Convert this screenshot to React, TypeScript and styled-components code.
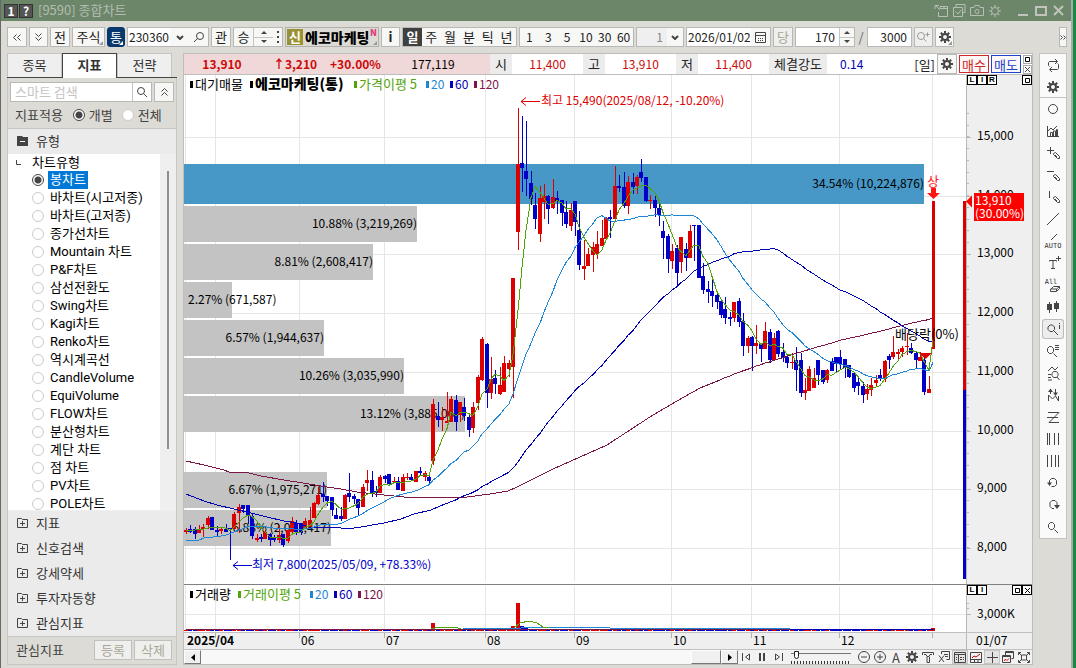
import React from "react";
import styled, { createGlobalStyle, css } from "styled-components";

const KR = `"Noto Sans CJK KR", "Noto Sans", sans-serif`;
const UP = "#dc0000";
const DOWN = "#0000c8";
const MA5 = "#52a30a";
const MA20 = "#1e86d6";
const MA60 = "#0000b4";
const MA120 = "#7a1648";

const GlobalStyle = createGlobalStyle`
  * { box-sizing: border-box; }
  body { margin: 0; font-family: ${KR}; font-size: 13px; line-height: 16px; color: #222; background: #168c3f; }
  button, input { font: inherit; color: inherit; margin: 0; }
  button { padding: 0; cursor: pointer; }
`;

/* ---------- window frame ---------- */

const Desktop = styled.div`
  min-height: 100vh;
  display: flex;
  padding-right: 3px;
  background: #168c3f;
`;

const Window = styled.div`
  flex: 1;
  min-width: 0;
  display: flex;
  flex-direction: column;
  background: #dcdbd6;
  border-left: 1px solid #696969;
  border-right: 2px solid #a9a9b0;
`;

const TitleBar = styled.header`
  height: 21px;
  flex: none;
  display: flex;
  align-items: center;
  gap: 1px;
  padding: 0 4px 0 3px;
  background: #6c8669;
  color: #b4bcb0;
`;

const TitleBadge = styled.button`
  width: 14px;
  height: 14px;
  border: 1px solid #333;
  background: #555;
  color: #fff;
  font-size: 12px;
  font-weight: 700;
  line-height: 12px;
`;

const Title = styled.h1`
  margin: 0 0 0 4px;
  padding-bottom: 2px;
  font-size: 13px;
  font-weight: 400;
`;

const TitleIcons = styled.div`
  margin-left: auto;
  display: flex;
  align-items: center;
  gap: 2px;
`;

const TitleButton = styled.button`
  width: 16px;
  height: 16px;
  border: 0;
  background: none;
  color: #b9beb6;
  display: grid;
  place-items: center;
`;

/* ---------- toolbar ---------- */

const Toolbar = styled.div`
  flex: none;
  display: flex;
  align-items: center;
  gap: 2px;
  padding: 6px 4px 6px 6px;
`;

const ToolButton = styled.button<{ $w?: number; $tone?: "plain" | "navy" | "dark" | "muted" }>`
  position: relative;
  flex: none;
  width: ${(p) => p.$w ?? 20}px;
  height: 20px;
  display: flex;
  align-items: center;
  justify-content: center;
  border: 1px solid #b8b8b6;
  background: #f7f7f6;
  color: #222;
  line-height: 16px;
  ${(p) => p.$tone === "navy" && css`background: #08386c; border-color: #08386c; color: #fff; border-radius: 3px;`}
  ${(p) => p.$tone === "dark" && css`background: #404040; border-color: #404040; color: #fff; font-weight: 700;`}
  ${(p) => p.$tone === "muted" && css`background: #efefed; color: #a8a797;`}
`;

const Corner = styled.i<{ $c?: string }>`
  position: absolute;
  right: 1px;
  bottom: 1px;
  border: 2px solid transparent;
  border-right-color: ${(p) => p.$c ?? "#999"};
  border-bottom-color: ${(p) => p.$c ?? "#999"};
`;

const Group = styled.div<{ $w: number }>`
  flex: none;
  display: flex;
  width: ${(p) => p.$w}px;
  height: 20px;
  border: 1px solid #b8b8b6;
  background: #f7f7f6;
  > * + * { border-left: 1px solid #c4c4c2; }
`;

const Cell = styled.button<{ $on?: boolean; $w?: number; $bare?: boolean }>`
  flex: ${(p) => (p.$w ? "none" : "1")};
  width: ${(p) => (p.$w ? `${p.$w}px` : "auto")};
  min-width: 0;
  border: 0 solid #c4c4c2;
  display: flex;
  align-items: center;
  justify-content: center;
  background: ${(p) => (p.$on ? "#404040" : "transparent")};
  color: ${(p) => (p.$on ? "#fff" : "#222")};
  font-weight: ${(p) => (p.$on ? 700 : 400)};
`;

const NumCell = styled(Cell)`
  font-size: 12px;
`;

const Field = styled.input<{ $right?: boolean; $soft?: boolean }>`
  flex: 1;
  min-width: 0;
  width: 0;
  border: 0;
  padding: 0 ${(p) => (p.$right ? 4 : 1)}px 0 1px;
  background: ${(p) => (p.$soft ? "#efefef" : "#fff")};
  color: ${(p) => (p.$soft ? "#888" : "#222")};
  font-size: 12px;
  text-align: ${(p) => (p.$right ? "right" : "left")};
  outline: none;
`;

const Spin = styled.div<{ $w: number }>`
  flex: none;
  width: ${(p) => p.$w}px;
  display: flex;
  flex-direction: column;
  > button + button { border-top: 1px solid #c4c4c2; }
`;

const SpinButton = styled.button`
  flex: 1;
  border: 0;
  background: none;
  display: grid;
  place-items: center;
`;

const NameBox = styled.button`
  flex: none;
  position: relative;
  width: 94px;
  height: 20px;
  display: flex;
  align-items: center;
  gap: 2px;
  padding: 0 1px;
  border: 1px solid #b0b0ae;
  background: #dcdbd6;
  color: #000;
  font-size: 14px;
  font-weight: 900;
  white-space: nowrap;
`;

const NameBadge = styled.span`
  flex: none;
  width: 16px;
  height: 16px;
  line-height: 16px;
  background: #9c9132;
  color: #fff;
  font-size: 13px;
  font-weight: 700;
`;

const NewMark = styled.sup`
  position: absolute;
  right: 1px;
  top: 0;
  font-size: 9px;
  line-height: 10px;
  color: #e0407a;
`;

const Slash = styled.span`
  width: 8px;
  text-align: center;
  color: #666;
`;

const Push = styled.div`
  flex: 1;
`;

/* ---------- body ---------- */

const Body = styled.div`
  flex: 1;
  min-height: 0;
  display: flex;
  gap: 6px;
  padding: 0 4px 4px 6px;
`;

const Side = styled.aside`
  flex: none;
  width: 170px;
  display: flex;
  flex-direction: column;
`;

const Tabs = styled.div`
  flex: none;
  display: flex;
  height: 25px;
  border-bottom: 1px solid #444;
`;

const Tab = styled.button<{ $on?: boolean }>`
  width: 55px;
  height: ${(p) => (p.$on ? 25 : 24)}px;
  padding-bottom: 2px;
  border: 1px solid ${(p) => (p.$on ? "#444" : "#c4c4c2")};
  border-bottom: 0;
  background: ${(p) => (p.$on ? "#fff" : "#efefef")};
  color: #333;
  font-weight: ${(p) => (p.$on ? 700 : 400)};
`;

const SidePanel = styled.div`
  flex: 1;
  min-width: 0;
  display: flex;
  flex-direction: column;
  border: 1px solid #c6c6c4;
  border-top: 0;
`;

const SearchRow = styled.div`
  flex: none;
  display: flex;
  gap: 2px;
  padding: 4px 2px 0;
`;

const SearchBox = styled.div`
  flex: 1;
  min-width: 0;
  display: flex;
  height: 20px;
  border: 1px solid #b8b8b6;
  background: #fff;
  > button { border-left-width: 1px; }
`;

const SearchInput = styled.input`
  flex: 1;
  width: 0;
  min-width: 0;
  border: 0;
  padding: 0 4px;
  outline: none;
  background: none;
  &::placeholder { color: #c4c4c4; opacity: 1; }
`;

const ApplyRow = styled.div`
  flex: none;
  display: flex;
  align-items: center;
  height: 27px;
  padding: 0 7px;
  color: #444;
  border-bottom: 1px solid #c6c6c4;
`;

const RadioLabel = styled.label<{ $ml?: number }>`
  display: flex;
  align-items: center;
  gap: 4px;
  margin-left: ${(p) => p.$ml ?? 0}px;
`;

const Radio = styled.input`
  appearance: none;
  flex: none;
  width: 12px;
  height: 12px;
  border: 1px solid #ccc;
  border-radius: 50%;
  background: #fff;
  &:checked {
    border-color: #444;
    background: radial-gradient(circle, #444 0 3px, #fff 4px);
  }
`;

const Section = styled.button`
  flex: none;
  display: flex;
  align-items: center;
  gap: 8px;
  height: 25px;
  padding: 0 9px 2px;
  border: 0;
  background: #ebebeb;
  color: #333;
  text-align: left;
`;

const TreeWrap = styled.div`
  flex: 1 1 356px;
  min-height: 0;
  display: flex;
  background: #efefef;
`;

const Tree = styled.div`
  flex: 1;
  height: 356px;
  overflow: hidden;
  background: #fff;
  color: #000;
  font-family: Roboto, ${KR};
`;

const TreeHead = styled.div`
  display: flex;
  align-items: center;
  gap: 11px;
  height: 17px;
  padding-left: 8px;
`;

const TreeRow = styled.label`
  display: flex;
  align-items: center;
  gap: 4px;
  height: 18px;
  padding-left: 24px;
  white-space: nowrap;
`;

const TreeText = styled.span<{ $on: boolean }>`
  padding: 0 2px;
  line-height: 18px;
  background: ${(p) => (p.$on ? "#0078d7" : "transparent")};
  color: ${(p) => (p.$on ? "#fff" : "#000")};
`;

const TreeScroll = styled.div`
  flex: none;
  width: 16px;
  padding: 17px 7px 0;
`;

const TreeThumb = styled.div`
  height: 278px;
  background: #8e8e8e;
`;

const SideFoot = styled.div`
  flex: none;
  display: flex;
  align-items: center;
  gap: 2px;
  height: 28px;
  padding: 0 4px 2px 8px;
  border-top: 1px solid #c6c6c4;
  color: #444;
`;

const FootButton = styled.button`
  width: 38px;
  height: 20px;
  border: 1px solid #c0c0be;
  background: #efefed;
  color: #a8a797;
`;

/* ---------- chart ---------- */

const ChartBox = styled.main`
  flex: 1;
  min-width: 0;
  display: flex;
  flex-direction: column;
  border: 1px solid #bdbdbd;
  background: #fff;
`;

const QuoteBar = styled.div`
  flex: none;
  display: flex;
  height: 21px;
  border-bottom: 1px solid #bdbdbd;
  font-size: 12px;
  line-height: 19px;
  white-space: nowrap;
`;

const QuoteMain = styled.div`
  flex: none;
  width: 306px;
  display: flex;
  background: #f0d8d8;
  color: #cc0a0a;
  font-weight: 700;
`;

const Q = styled.span<{ $w: number; $c?: string; $tag?: boolean; $left?: boolean }>`
  flex: none;
  width: ${(p) => p.$w}px;
  text-align: ${(p) => (p.$left ? "left" : "center")};
  padding-left: ${(p) => (p.$left ? 13 : 0)}px;
  color: ${(p) => p.$c ?? "inherit"};
  font-weight: ${(p) => (p.$c ? 400 : "inherit")};
  font-size: ${(p) => (p.$tag ? 13 : 12)}px;
  background: ${(p) => (p.$tag ? "#ececec" : "transparent")};
`;

const QuoteTools = styled.div`
  margin-left: auto;
  display: flex;
  align-items: center;
  gap: 2px;
  font-size: 13px;
`;

const TradeButton = styled.button<{ $c: string }>`
  width: 30px;
  height: 18px;
  border: 1px solid ${(p) => p.$c};
  background: #fdf8f8;
  color: ${(p) => p.$c};
  line-height: 15px;
`;

const MiniStack = styled.div`
  display: flex;
  flex-direction: column;
  gap: 1px;
`;

const MiniButton = styled.button`
  width: 9px;
  height: 9px;
  display: grid;
  place-items: center;
  border: 1px solid #aaa;
  background: #fff;
`;

const PanelRow = styled.section<{ $h: number; $grow?: boolean; $line?: string }>`
  flex: ${(p) => (p.$grow ? `1 1 ${p.$h}px` : "none")};
  height: ${(p) => (p.$grow ? "auto" : `${p.$h}px`)};
  min-height: 0;
  display: flex;
  border-bottom: 1px solid ${(p) => p.$line ?? "#c0c0c0"};
`;

const Plot = styled.svg`
  flex: 1;
  min-width: 0;
  width: 0;
  height: 100%;
  display: block;
  overflow: visible;
  font-family: ${KR};
  font-size: 12px;
`;

const Axis = styled.div`
  flex: none;
  position: relative;
  width: 66px;
  border-left: 1px solid #b8b8b8;
  background: #efefef;
  > svg { display: block; width: 100%; height: 100%; font-family: ${KR}; font-size: 12px; overflow: visible; }
`;

const AxisButtons = styled.div`
  position: absolute;
  left: 0;
  right: 0;
  top: 0;
  display: flex;
`;

const AxisButton = styled.button<{ $push?: boolean }>`
  width: 10px;
  height: 10px;
  margin-left: ${(p) => (p.$push ? "auto" : "0")};
  display: grid;
  place-items: center;
  border: 1px solid #000;
  & + & { border-left-width: ${(p) => (p.$push ? 1 : 0)}px; }
  background: #fff;
  color: #000;
  font-family: "Liberation Sans", sans-serif;
  font-size: 8px;
  font-weight: 700;
  line-height: 8px;
`;

const DateRow = styled.div`
  flex: none;
  height: 17px;
  display: flex;
  background: #efefef;
  border-bottom: 1px solid #c0c0c0;
`;

const BottomBar = styled.div`
  flex: none;
  height: 14px;
  display: flex;
  background: #f2f2f2;
`;

const Track = styled.div`
  flex: 1;
  display: flex;
  background: #f8f8f8;
`;

const Classic = styled.button<{ $w: number; $push?: boolean }>`
  flex: none;
  width: ${(p) => p.$w}px;
  margin-left: ${(p) => (p.$push ? "auto" : "0")};
  display: grid;
  place-items: center;
  border: 1px solid;
  border-color: #fff #777 #777 #fff;
  background: #f0f0f0;
`;

const BarButton = styled.button<{ $on?: boolean }>`
  flex: none;
  width: 16px;
  border: 0;
  display: grid;
  place-items: center;
  background: ${(p) => (p.$on ? "#e4e4e4" : "transparent")};
  box-shadow: ${(p) => (p.$on ? "inset 0 0 0 1px #c4c4c4" : "none")};
  color: #444;
`;

const SliderWrap = styled.div`
  flex: none;
  width: 70px;
  padding: 0 5px;
`;

const Slider = styled.input`
  appearance: none;
  display: block;
  width: 60px;
  height: 14px;
  background:
    linear-gradient(#777, #777) 0 3px / 100% 1px no-repeat,
    repeating-linear-gradient(90deg, #333 0 1px, transparent 1px 3px) 0 11px / 100% 3px no-repeat;
  &::-webkit-slider-thumb {
    appearance: none;
    width: 5px;
    height: 8px;
    margin-top: -5px;
    border: 1px solid #222;
    border-radius: 0 0 3px 3px;
    background: #fff;
  }
`;

const Strip = styled.nav`
  flex: none;
  align-self: flex-start;
  width: 28px;
  border: 1px solid #c4c4c2;
  background: #fafafa;
  display: flex;
  flex-direction: column;
  align-items: center;
`;

const StripButton = styled.button<{ $on?: boolean; $line?: boolean }>`
  width: ${(p) => (p.$on ? 22 : 26)}px;
  height: ${(p) => (p.$on ? 20 : 22)}px;
  margin: ${(p) => (p.$on ? 1 : 0)}px 0;
  border: 0;
  border-bottom: ${(p) => (p.$line ? "1px solid #c4c4c2" : "0")};
  box-shadow: ${(p) => (p.$on ? "inset 0 0 0 1px #bbb" : "none")};
  border-radius: ${(p) => (p.$on ? 3 : 0)}px;
  background: ${(p) => (p.$on ? "#ededed" : "transparent")};
  display: grid;
  place-items: center;
  color: #444;
`;

/* ---------- icons ---------- */

type IconProps = { d?: string; fill?: string; w?: number; h?: number; c?: string; sw?: number; children?: React.ReactNode };

const Icon = ({ d, fill, w = 16, h = 16, c = "#444", sw = 1, children }: IconProps) => (
  <svg width={w} height={h} viewBox={`0 0 ${w} ${h}`} fill="none" stroke={c} strokeWidth={sw} aria-hidden="true">
    {d && <path d={d} />}
    {fill && <path d={fill} fill={c} stroke="none" />}
    {children}
  </svg>
);

const Gear = ({ c = "#444", thin = false }: { c?: string; thin?: boolean }) => (
  <Icon w={12} h={12} c={c}>
    <circle cx="6" cy="6" r={thin ? 3.5 : 3} strokeWidth={thin ? 1 : 2} />
    <path d="M6 0v2M6 10v2M0 6h2M10 6h2M1.8 1.8l1.5 1.5M8.7 8.7l1.5 1.5M1.8 10.2l1.5-1.5M8.7 3.3l1.5-1.5" strokeWidth={thin ? 1.2 : 2} />
  </Icon>
);

const Lens = ({ flip = false }: { flip?: boolean }) => (
  <Icon w={12} h={12} d={flip ? "M4.5 7.5L1 11" : "M7.5 7.5L11 11"}>
    <circle cx={flip ? 7 : 5} cy="5" r="3.5" />
  </Icon>
);

const Caret = ({ up = false }: { up?: boolean }) => <Icon w={6} h={3} fill={up ? "M0 3L3 0L6 3z" : "M0 0L3 3L6 0z"} />;
const Chevron = () => <Icon w={8} h={5} sw={2} d="M1 1l3 3l3-3" />;
const PENCIL = "M12.5 11.5l2-1l4 4v2h-2l-4-4zM14 13l2 2";
const STRIP_LENS = "M13.5 13.5L17 17M9.5 6.5h2l2 2v3l-2 2h-2l-2-2v-3z";

const stripIcons: { name: string; on?: boolean; line?: boolean; node: React.ReactNode }[] = [
  { name: "새로고침", node: <Icon w={24} h={22} d="M8.5 12.5l-1-1V8.5l1-1H16M14 5l2.5 2.5L14 10M16.5 9.5l1 1v4l-1 1H9M11 13l-2.5 2.5L11 18" /> },
  { name: "설정", line: true, node: <Gear /> },
  { name: "원", node: <Icon w={24} h={22}><circle cx="12" cy="11" r="4.5" /></Icon> },
  { name: "차트", node: <Icon w={24} h={22} d="M6.5 6v10.5H18M7 11l3-3l2 2l4-4M9.5 16v-3.5h2V16M12.5 16v-5h2V16M15.5 16V9.5h1V16" /> },
  { name: "십자선 그리기", node: <Icon w={24} h={22} d={`M6 8.5h7M9.5 5v7${PENCIL}`} /> },
  { name: "수평선 그리기", node: <Icon w={24} h={22} d={`M6 7.5h7${PENCIL}`} /> },
  { name: "수직선 그리기", node: <Icon w={24} h={22} d={`M8.5 5v7${PENCIL}`} /> },
  { name: "추세선", node: <Icon w={24} h={22} d="M6 17L18 5" /> },
  { name: "자동 추세선", node: <Icon w={24} h={22} d="M10 10l6-6"><text x="12" y="18" fontSize="7" fontFamily="DejaVu Sans Mono, monospace" textAnchor="middle" fill="#333" stroke="none">AUTO</text></Icon> },
  { name: "문자", node: <Icon w={24} h={22} d="M15 6.5h5M17.5 4v5M8.5 9.5V8.5h7v1M12 8.5v8M10 16.5h4" /> },
  { name: "전체 지우기", node: <Icon w={24} h={22} d="M9.5 15.5l3-3h6v2l-3 3h-6zM9.5 15h6l3-2.5M15.5 15v2"><text x="10" y="10" fontSize="7" fontFamily="DejaVu Sans Mono, monospace" textAnchor="middle" fill="#333" stroke="none">All</text></Icon> },
  { name: "봉", node: <Icon w={24} h={22} d="M8.500 6v11M15.5 5v11" fill="M6 8h5v6H6zM13 7h5v6h-5z" /> },
  { name: "정보 조회", on: true, node: <Icon w={22} h={20} d="M12 12l4 4M8 6h2.500l2 2v2.500l-2 2H8l-2-2V8zM17.500 4v1M17.500 6v4" /> },
  { name: "목록 조회", node: <Icon w={24} h={22} d="M12.5 13.5L16 17M8.5 6.5h2l2 2v3l-2 2h-2l-2-2v-3zM14 5.5h4M14 7.5h4M14 9.5h4" /> },
  { name: "차트 검색", node: <Icon w={24} h={22} d="M7 9l4-4l3 3l3-3M7 12.5h3M7 15.5h3M7 18h4M16 15l2.5 3M12.5 9.5h3l1.500 2v2l-1.500 2h-3l-1.500-2v-2z" /> },
  { name: "매매 신호", node: <Icon w={24} h={22} d="M7.5 17v-6l4 4l3-3l3 5v-5M9.5 10V6M14.5 5v5" fill="M7 8l2.500-3.500L12 8zM12 8.500l2.500 3.500l2.500-3.500z" /> },
  { name: "지그재그", node: <Icon w={24} h={22} d="M7 6.5h11L8 16.5h10M6 11.5h11" /> },
  { name: "시간대", node: <Icon w={24} h={22} d="M6.5 5v12M8.5 5v12M13.5 5v12M17.5 5v12" /> },
  { name: "등분선", node: <Icon w={24} h={22} d="M6.5 5v12M10.5 5v12M14.5 5v12M17.5 5v12" /> },
  { name: "실행 취소", node: <Icon w={24} h={22} d="M8.500 11V8.500l2-2h3l2 2v4l-2 2h-3" fill="M6 10.500h5l-2.500 3.500z" /> },
  { name: "다시 실행", node: <Icon w={24} h={22} d="M13 14.500h-2l-2-2v-4l2-2h3l2 2V11" fill="M13 11h6l-3 4z" /> },
  { name: "확대", node: <Icon w={24} h={22} d={STRIP_LENS} /> },
];

/* ---------- chart data ---------- */

type Candle = [up: 0 | 1, top: number, bottom: number, high: number, low: number];

const candles = [
  [1,530,532,528,534],[0,529,532,525,533],[0,529,534,527,539],[1,529,533,525,533],[1,527,529,524,537],[1,518,525,516,529],[0,517,530,517,530],[0,530,532,526,537],[1,529,531,527,534],[0,529,532,524,532],
  [0,528,529,528,560],[1,514,529,512,529],[1,507,513,504,533],[0,505,509,505,513],[0,505,516,505,524],[0,516,536,514,539],[1,538,540,534,542],[0,537,539,534,542],[1,532,539,530,539],[0,534,540,533,546],
  [0,538,540,535,542],[1,535,540,525,543],[0,534,545,534,547],[1,530,541,530,543],[1,521,532,517,534],[0,523,532,520,535],[0,523,533,523,535],[1,521,529,518,529],[1,520,527,507,529],[1,503,518,502,518],
  [1,495,504,487,505],[0,494,497,482,502],[0,496,501,496,506],[0,497,510,497,516],[0,515,519,508,519],[0,516,519,507,521],[1,495,519,494,519],[0,493,497,473,502],[0,496,499,494,504],[0,499,508,499,515],
  [1,487,507,484,507],[1,480,483,470,491],[0,480,493,471,497],[0,491,493,486,497],[1,477,493,475,493],[0,476,479,475,483],[0,474,484,474,485],[1,481,482,477,483],[0,481,490,477,490],[1,477,491,474,491],
  [1,477,478,473,480],[0,477,480,474,480],[1,471,482,471,482],[0,471,473,467,476],[1,473,477,471,481],[0,477,481,474,485],[1,404,461,399,465],[0,416,420,402,427],[1,417,420,407,431],[1,421,423,392,423],
  [1,399,422,396,422],[0,400,422,395,431],[1,402,415,402,422],[0,407,416,398,421],[0,417,430,413,437],[1,407,428,402,433],[1,377,403,375,410],[1,339,380,337,381],[0,344,393,343,408],[1,379,393,357,399],
  [0,378,384,370,394],[1,385,394,367,395],[1,363,392,356,392],[1,363,369,360,377],[1,278,367,278,398],[1,164,232,108,250],[0,163,168,116,192],[0,171,179,121,196],[0,183,199,171,205],[0,205,219,193,229],
  [1,198,234,186,242],[1,196,202,184,219],[0,196,209,195,224],[1,197,208,179,209],[0,198,201,191,214],[0,200,213,200,226],[0,212,224,201,228],[1,210,226,203,231],[0,201,222,201,236],[0,230,265,211,270],
  [1,266,269,240,280],[1,254,266,248,266],[1,247,255,242,272],[1,244,254,231,259],[1,238,246,220,246],[1,218,239,217,239],[0,217,219,210,238],[1,186,219,166,221],[0,186,188,175,192],[0,187,206,172,208],
  [1,182,206,176,214],[0,182,187,173,194],[1,177,186,175,194],[0,172,178,159,182],[0,177,201,177,202],[1,200,201,195,209],[0,200,208,196,217],[0,208,215,204,226],[0,231,238,221,259],[0,236,259,234,273],
  [1,251,261,244,269],[0,248,273,245,285],[1,237,262,237,273],[0,249,258,243,271],[1,231,258,225,258],[0,225,226,225,261],[0,225,278,225,278],[0,276,290,263,294],[0,289,292,281,303],[0,291,296,279,307],
  [0,295,302,294,309],[0,301,315,300,318],[0,309,318,297,324],[0,317,319,312,326],[1,302,318,302,322],[0,301,322,298,327],[0,321,346,313,356],[1,338,346,336,353],[0,337,346,336,371],[1,343,346,325,354],
  [0,343,349,343,362],[1,331,349,322,349],[0,332,360,329,363],[1,338,360,333,360],[0,331,354,330,357],[0,352,358,343,362],[0,357,363,356,368],[1,362,363,353,369],[0,360,370,347,391],[0,360,393,353,397],
  [1,390,393,378,400],[1,369,391,366,391],[1,378,388,368,388],[0,360,375,360,385],[0,370,382,370,384],[1,370,380,369,383],[0,361,371,358,371],[0,357,364,357,373],[0,357,364,350,369],[0,359,368,359,378],
  [0,365,377,365,378],[0,373,388,373,392],[0,382,386,376,395],[0,386,395,382,403],[1,389,394,384,400],[1,385,390,378,396],[1,380,383,375,387],[0,375,379,369,381],[1,361,379,360,382],[0,356,360,354,369],
  [1,352,357,336,359],[1,352,354,349,361],[1,348,352,346,357],[1,346,347,333,355],[0,348,353,343,354],[0,353,360,351,368],[1,357,361,352,361],[0,360,392,356,395],[1,389,393,376,393],[1,201,349,201,349],
] as Candle[];

const barX = (i: number) => Math.round(185.8 + i * 4.423);
const LAST = candles.length - 1;
const closes = candles.map(([up, top, bottom]) => (up ? top : bottom));

/* average of the last n closes; before there are n bars the seed points are used */
const average = (n: number, seed: string) => {
  const points: string[] = seed ? seed.split(" ") : [];
  for (let i = n; i < closes.length; i++) {
    const sum = closes.slice(i - n + 1, i + 1).reduce((a, b) => a + b, 0);
    points.push(`${barX(i)},${(sum / n).toFixed(1)}`);
  }
  return points.join(" ");
};

const lines = [
  { c: MA120, p: average(120, "186,461 204,465 224,470 229,472 249,473 261,476 284,480 309,484 327,487 341,489 357,492 384,495 404,497 417,497 467,497 490,494 508,491 517,487 533,479 553,469 580,457 607,445 633,428 653,415 677,401 700,388") },
  { c: MA60, p: average(60, "186,494 204,501 217,505 234,509 251,513 267,517 284,521 297,523 309,527 327,527 341,528 354,528 361,527 384,523 401,519 414,514 431,510 440,506") },
  { c: MA20, p: average(20, "186,540 199,540 204,538 213,537 221,536 226,535 234,532 247,527 254,526 267,527") },
  { c: MA5, p: average(5, "186,531 195,530 204,529") },
];

const volumeShare = [
  { y: 164, h: 40, x: 924, t: "34.54% (10,224,876)" },
  { y: 206, h: 36, x: 417, t: "10.88% (3,219,269)" },
  { y: 244, h: 36, x: 373, t: "8.81% (2,608,417)" },
  { y: 282, h: 36, x: 232, t: "2.27% (671,587)" },
  { y: 320, h: 36, x: 324, t: "6.57% (1,944,637)" },
  { y: 358, h: 36, x: 404, t: "10.26% (3,035,990)" },
  { y: 396, h: 36, x: 465, t: "13.12% (3,885,067)" },
  { y: 472, h: 36, x: 327, t: "6.67% (1,975,271)" },
  { y: 510, h: 36, x: 331, t: "6.88% (2,037,417)" },
];

const months = [
  { x: 215, t: "" }, { x: 299, t: "06" }, { x: 384, t: "07" }, { x: 485, t: "08" }, { x: 574, t: "09" },
  { x: 671, t: "10" }, { x: 751, t: "11" }, { x: 839, t: "12" }, { x: 932, t: "" },
];

const prices = [15, 14, 13, 12, 11, 10, 9, 8].map((k, i) => ({ t: `${k},000`, y: Math.round(137 + i * 58.7) }));
const volumeTop: Record<number, number> = { 56: 623, 67: 629, 74: 626, 75: 603, 76: 626, 77: 628, 78: 629, 169: 628 };

const treeItems = [
  "봉차트", "바차트(시고저종)", "바차트(고저종)", "종가선차트", "Mountain 차트", "P&F차트", "삼선전환도", "Swing차트", "Kagi차트", "Renko차트",
  "역시계곡선", "CandleVolume", "EquiVolume", "FLOW차트", "분산형차트", "계단 차트", "점 차트", "PV차트", "POLE차트",
];

const LegendItem = ({ x, y, c, t, bold }: { x: number; y: number; c: string; t: string; bold?: boolean }) => (
  <>
    <rect x={x} y={y - 8} width="3" height="7" fill={c} />
    <text x={x + 5} y={y} fill={c} fontSize={bold ? 14 : t.charCodeAt(0) > 255 ? 13 : 12} fontWeight={bold ? 900 : 400}>{t}</text>
  </>
);

const MonthGrid = ({ y1, y2 }: { y1: number; y2: number }) => (
  <g stroke="#e6e6e6" shapeRendering="crispEdges">
    <path d={`M185.5 ${y1}V${y2}`} />
    {months.map((m) => <path key={m.x} d={`M${m.x}.5 ${y1}V${y2}`} />)}
  </g>
);

const PriceChart = () => (
  <Plot viewBox="184 75 782 509" role="img" aria-label="에코마케팅 일봉 차트">
    <MonthGrid y1={75} y2={581} />
    <g stroke="#e6e6e6" shapeRendering="crispEdges">
      {prices.map((p) => <path key={p.t} d={`M184 ${p.y}.5H966`} />)}
    </g>
    {volumeShare.map((v, i) => (
      <rect key={v.y} x="184" y={v.y} width={v.x - 184} height={v.h} fill={i ? "#c3c3c3" : "#4798c7"} />
    ))}
    {volumeShare.map((v) => {
      const narrow = v.x < 260;
      return <text key={v.y} x={narrow ? 188 : v.x} y={v.y + v.h / 2 + 4} textAnchor={narrow ? "start" : "end"} fill="#000">{v.t}</text>;
    })}
    <g shapeRendering="crispEdges">
      {candles.map(([up, top, bottom, high, low], i) => (
        <g key={i} fill={up ? UP : DOWN}>
          <rect x={barX(i)} y={high} width="1" height={Math.max(1, low - high)} />
          <rect x={barX(i) - (i === LAST ? 1 : 2)} y={top} width={i === LAST ? 3 : 4} height={Math.max(1, bottom - top)} />
        </g>
      ))}
      <rect x="963" y="201" width="3" height="189" fill={UP} />
      <rect x="963" y="390" width="3" height="189" fill={DOWN} />
    </g>
    <g fill="none">
      {lines.map((l) => <polyline key={l.c} points={l.p} stroke={l.c} shapeRendering="crispEdges" />)}
    </g>
    <LegendItem x={190} y={89} c="#000" t="대기매물" />
    <LegendItem x={250} y={89} c="#000" t="에코마케팅(통)" bold />
    <LegendItem x={354} y={89} c={MA5} t="가격이평 5" />
    <LegendItem x={426} y={89} c={MA20} t="20" />
    <LegendItem x={450} y={89} c={MA60} t="60" />
    <LegendItem x={474} y={89} c={MA120} t="120" />
    <path d="M540 101.5H521M526 97.5l-5 4l5 4" stroke={UP} fill="none" />
    <text x="541" y="105" fill={UP}>최고 15,490(2025/08/12, -10.20%)</text>
    <path d="M252 565.5H233M238 561.5l-5 4l5 4" stroke={DOWN} fill="none" />
    <text x="252" y="569" fill={DOWN}>최저 7,800(2025/05/09, +78.33%)</text>
    <text x="933" y="186" fill="#ff1414" fontSize="13" textAnchor="middle">상</text>
    <path d="M931 188h5v5h4l-6.500 6l-6.500-6h4z" fill="#ff1414" />
    <path d="M919 353h13l-6.500 6z" fill={UP} />
    <text x="895" y="339" fill="#000" fontSize="13">배당락(0%)</text>
  </Plot>
);

const PriceAxis = () => (
  <Axis>
    <svg viewBox="967 75 65 509">
      <g stroke="#b8b8b8" shapeRendering="crispEdges">
        {Array.from({ length: 39 }, (_, i) => <path key={i} d={`M967 ${Math.round(113 + i * 11.74)}.5h2`} />)}
        {prices.map((p) => <path key={p.t} d={`M967 ${p.y}.5h4`} />)}
      </g>
      {prices.map((p) => <text key={p.t} x="977" y={p.y + 3} fill="#000">{p.t}</text>)}
      <path d="M966 201.500l6-6v12z" fill="#f00" />
      <rect x="974" y="193" width="50" height="28" fill="#f00" />
      <text x="975" y="205" fill="#fff">13,910</text>
      <text x="975" y="218" fill="#fff">(30.00%)</text>
    </svg>
    <AxisButtons>
      <AxisButton>L</AxisButton>
      <AxisButton>I</AxisButton>
      <AxisButton>R</AxisButton>
      <AxisButton $push aria-label="최대화"><Icon w={5} h={5} c="#000" d="M.5.5h4v4h-4z" /></AxisButton>
    </AxisButtons>
  </Axis>
);

const VolumeChart = () => (
  <Plot viewBox="184 585 782 47" role="img" aria-label="거래량 차트">
    <MonthGrid y1={586} y2={632} />
    <path d="M184 614.5H966" stroke="#e6e6e6" />
    <g shapeRendering="crispEdges">
      {candles.map(([up], i) => (
        <rect key={i} x={barX(i) - 2} y={volumeTop[i] ?? 630} width="4" height={631 - (volumeTop[i] ?? 630)} fill={up ? UP : DOWN} />
      ))}
      <g fill="none">
        <path d="M186 629.5H935" stroke={MA120} />
        <path d="M790 629.5H933" stroke={MA60} />
        <path d="M463 628.5H518L524 627.5H605L614 628.5H790" stroke={MA20} />
        <path d="M431 628.5l8-1h16l6 1M514 628l6-5l9-2l8 2l6 4l6 1" stroke={MA5} />
      </g>
    </g>
    <LegendItem x={190} y={599} c="#000" t="거래량" />
    <LegendItem x={238} y={599} c={MA5} t="거래이평 5" />
    <LegendItem x={310} y={599} c={MA20} t="20" />
    <LegendItem x={334} y={599} c={MA60} t="60" />
    <LegendItem x={358} y={599} c={MA120} t="120" />
  </Plot>
);

const VolumeAxis = () => (
  <Axis>
    <svg viewBox="967 585 65 47">
      <path d="M967 603.5h2M967 608.5h2M967 614.5h4" stroke="#b8b8b8" />
      <text x="977" y="618" fill="#000">3,000K</text>
    </svg>
    <AxisButtons>
      <AxisButton>L</AxisButton>
      <AxisButton>I</AxisButton>
      <AxisButton $push aria-label="최대화"><Icon w={5} h={5} c="#000" d="M.5.5h4v4h-4z" /></AxisButton>
      <AxisButton aria-label="닫기"><Icon w={7} h={7} c="#000" d="M1 1l5 5M6 1l-5 5" /></AxisButton>
    </AxisButtons>
  </Axis>
);

const FolderIcon = ({ open }: { open?: boolean }) =>
  open ? (
    <Icon w={11} h={10} fill="M0 0h5l1 1h5v9H0z"><path d="M3 5.5h5" stroke="#fff" /></Icon>
  ) : (
    <Icon w={11} h={10} d="M.5.5h4l1 1h5v8H.5zM3 5.5h5M5.5 3v5" />
  );

export default function App() {
  const [type, setType] = React.useState(0);
  return (
    <>
      <GlobalStyle />
      <Desktop>
        <Window>
          <TitleBar>
            <TitleBadge>1</TitleBadge>
            <TitleBadge>?</TitleBadge>
            <Title>[9590] 종합차트</Title>
            <TitleIcons>
              <TitleButton aria-label="분리"><Icon w={14} h={13} c="#b9beb6" d="M6 4.5V2.500h7.500v10h-9V8M6 4.5h7M10 2v2M1 5V1.5h4M1.5 1.5L6 6" /></TitleButton>
              <TitleButton aria-label="복사"><Icon w={14} h={13} c="#b9beb6" d="M4 3V.5h9v8h-2M1.5 3.5h9v9h-9zM3.5 7.500l2.500 2.500L9 6" sw={1} /></TitleButton>
              <TitleButton aria-label="캡처"><Icon w={14} h={13} c="#b9beb6" d="M.5 3.5h3.500l1-2h4l1 2h3.500v8H.5z"><circle cx="7" cy="7.5" r="2" /></Icon></TitleButton>
              <TitleButton aria-label="설정"><Gear c="#b9beb6" thin /></TitleButton>
              <Slash />
              <TitleButton aria-label="최소화"><Icon w={12} h={12} c="#c0c4bd" sw={2} d="M1 10h10" /></TitleButton>
              <TitleButton aria-label="최대화"><Icon w={12} h={12} c="#c0c4bd" sw={2} d="M1 2h10v8H1z" /></TitleButton>
              <TitleButton aria-label="닫기"><Icon w={12} h={12} c="#c0c4bd" sw={2} d="M1 1l9 9M10 1l-9 9" /></TitleButton>
            </TitleIcons>
          </TitleBar>

          <Toolbar>
            <ToolButton aria-label="접기"><Icon w={8} h={7} d="M3.5.5l-3 3l3 3M7.5.5l-3 3l3 3" /></ToolButton>
            <ToolButton $w={19} aria-label="펼치기"><Icon w={7} h={8} d="M.5.5l3 3l3-3M.5 4.5l3 3l3-3" /></ToolButton>
            <ToolButton>전</ToolButton>
            <ToolButton $w={33}>주식<Corner /></ToolButton>
            <ToolButton $w={18} $tone="navy">통<Corner $c="#fff" /></ToolButton>
            <Group $w={82}>
              <Field defaultValue="230360" aria-label="종목코드" />
              <Cell $w={19} aria-label="종목 목록"><Chevron /></Cell>
              <Cell $w={19} aria-label="종목 검색"><Lens flip /></Cell>
            </Group>
            <ToolButton>관</ToolButton>
            <Group $w={50}>
              <Cell $w={19}>승</Cell>
              <Spin $w={20}>
                <SpinButton aria-label="이전 종목"><Caret up /></SpinButton>
                <SpinButton aria-label="다음 종목"><Caret /></SpinButton>
              </Spin>
              <Cell aria-label="더보기"><Icon w={2} h={12} fill="M0 0h2v2H0zM0 5h2v2H0zM0 10h2v2H0z" /></Cell>
            </Group>
            <NameBox><NameBadge>신</NameBadge>에코마케팅<NewMark>N</NewMark><Corner /></NameBox>
            <ToolButton $w={19}><b>i</b></ToolButton>
            <Group $w={115}>
              {["일", "주", "월", "분", "틱", "년"].map((t, i) => <Cell key={t} $on={i === 0}>{t}</Cell>)}
            </Group>
            <Group $w={115}>
              {["1", "3", "5", "10", "30", "60"].map((t) => <NumCell key={t}>{t}</NumCell>)}
            </Group>
            <Group $w={48}>
              <Field defaultValue="1" $right $soft aria-label="주기" />
              <Cell $w={16} aria-label="주기 목록"><Chevron /></Cell>
            </Group>
            <Group $w={85}>
              <Field defaultValue="2026/01/02" aria-label="날짜" />
              <Cell $w={19} aria-label="달력"><Icon w={11} h={11} d="M.5.5h10v10H.5zM0 3.5h11M3 6.5h1M5 6.5h1M7 6.5h1M3 8.5h1M5 8.5h1M7 8.5h1" /></Cell>
            </Group>
            <ToolButton $tone="muted">당</ToolButton>
            <Group $w={60}>
              <Field defaultValue="170" $right aria-label="표시 봉 수" />
              <Spin $w={15}>
                <SpinButton aria-label="늘리기"><Caret up /></SpinButton>
                <SpinButton aria-label="줄이기"><Caret /></SpinButton>
              </Spin>
            </Group>
            <Slash>/</Slash>
            <Group $w={45}><Field defaultValue="3000" $right aria-label="전체 봉 수" /></Group>
            <ToolButton $w={19} $tone="muted" aria-label="확대"><Icon w={13} h={12} c="#999" d="M6.5 7.5l3 3M8.5 3.5h4M10.5 1.5v4"><circle cx="4" cy="5" r="3.5" /></Icon></ToolButton>
            <ToolButton $w={19} aria-label="차트 설정"><Gear /><Corner /></ToolButton>
            <Push />
            <ToolButton $w={8} aria-label="더보기"><Icon w={6} h={5} d="M.5.5l2 2l-2 2M3.5.5l2 2l-2 2" /></ToolButton>
          </Toolbar>

          <Body>
            <Side>
              <Tabs>
                <Tab>종목</Tab>
                <Tab $on>지표</Tab>
                <Tab>전략</Tab>
              </Tabs>
              <SidePanel>
                <SearchRow>
                  <SearchBox>
                    <SearchInput placeholder="스마트 검색" aria-label="스마트 검색" />
                    <Cell $w={19} aria-label="검색"><Lens /></Cell>
                  </SearchBox>
                  <ToolButton aria-label="접기"><Icon w={7} h={8} d="M.5 3.5l3-3l3 3M.5 7.5l3-3l3 3" /></ToolButton>
                </SearchRow>
                <ApplyRow>
                  지표적용
                  <RadioLabel $ml={10}><Radio type="radio" name="apply" defaultChecked />개별</RadioLabel>
                  <RadioLabel $ml={9}><Radio type="radio" name="apply" />전체</RadioLabel>
                </ApplyRow>
                <Section><FolderIcon open />유형</Section>
                <TreeWrap>
                  <Tree>
                    <TreeHead><Icon w={5} h={5} d="M.5 0v4.500H5" />차트유형</TreeHead>
                    {treeItems.map((t, i) => (
                      <TreeRow key={t}>
                        <Radio type="radio" name="type" checked={type === i} onChange={() => setType(i)} />
                        <TreeText $on={type === i}>{t}</TreeText>
                      </TreeRow>
                    ))}
                  </Tree>
                  <TreeScroll><TreeThumb /></TreeScroll>
                </TreeWrap>
                {["지표", "신호검색", "강세약세", "투자자동향", "관심지표"].map((t) => (
                  <Section key={t}><FolderIcon />{t}</Section>
                ))}
                <SideFoot>
                  관심지표
                  <Push />
                  <FootButton>등록</FootButton>
                  <FootButton>삭제</FootButton>
                </SideFoot>
              </SidePanel>
            </Side>

            <ChartBox>
              <QuoteBar>
                <QuoteMain>
                  <Q $w={76}>13,910</Q>
                  <Q $w={70}>↑3,210</Q>
                  <Q $w={46}>+30.00%</Q>
                  <Q $w={114} $c="#000">177,119</Q>
                </QuoteMain>
                <Q $w={22} $c="#222" $tag>시</Q>
                <Q $w={71} $c="#cc0a0a">11,400</Q>
                <Q $w={22} $c="#222" $tag>고</Q>
                <Q $w={71} $c="#cc0a0a">13,910</Q>
                <Q $w={22} $c="#222" $tag>저</Q>
                <Q $w={71} $c="#cc0a0a">11,400</Q>
                <Q $w={58} $c="#222" $tag>체결강도</Q>
                <Q $w={70} $c="#0000b4" $left>0.14</Q>
                <QuoteTools>
                  [일]
                  <ToolButton aria-label="설정"><Gear /></ToolButton>
                  <TradeButton $c="#d02828">매수</TradeButton>
                  <TradeButton $c="#1c44cc">매도</TradeButton>
                  <MiniStack>
                    <MiniButton aria-label="최대화"><Icon w={5} h={5} c="#000" d="M.5.5h4v4h-4z" /></MiniButton>
                    <MiniButton aria-label="닫기"><Icon w={5} h={5} d="M0 0l5 5M5 0l-5 5" /></MiniButton>
                  </MiniStack>
                </QuoteTools>
              </QuoteBar>
              <PanelRow $h={510} $grow $line="#808080">
                <PriceChart />
                <PriceAxis />
              </PanelRow>
              <PanelRow $h={48}>
                <VolumeChart />
                <VolumeAxis />
              </PanelRow>
              <DateRow>
                <Plot viewBox="184 633 782 16">
                  {months.map((m) => (
                    <g key={m.x}>
                      <path d={`M${m.x}.5 633v5`} stroke="#b0b0b0" />
                      {m.t && <text x={m.x + 2} y="645">{m.t}</text>}
                    </g>
                  ))}
                  <text x="187" y="645" fontWeight="700">2025/04</text>
                </Plot>
                <Axis><svg viewBox="967 633 65 16"><text x="976" y="645">01/07</text></svg></Axis>
              </DateRow>
              <BottomBar>
                <Track>
                  <Classic $w={17} aria-label="왼쪽"><Icon w={4} h={7} fill="M4 0v7L0 3.500z" c="#000" /></Classic>
                  <Classic $w={30} $push aria-label="스크롤" />
                  <Classic $w={17} aria-label="오른쪽"><Icon w={4} h={7} fill="M0 0v7l4-3.500z" c="#000" /></Classic>
                </Track>
                <BarButton aria-label="처음"><Icon w={9} h={8} d="M.5 0v8M7.5 1v6l-4-3z" /></BarButton>
                <BarButton aria-label="일시정지"><Icon w={7} h={8} sw={2} d="M1 0v8M5 0v8" /></BarButton>
                <BarButton aria-label="끝"><Icon w={9} h={8} d="M8.5 0v8M1.5 1v6l4-3z" /></BarButton>
                <SliderWrap><Slider type="range" min="0" max="100" defaultValue="5" aria-label="속도" /></SliderWrap>
                <BarButton aria-label="축소"><Icon w={12} h={12} d="M3 6h6"><circle cx="6" cy="6" r="5.5" /></Icon></BarButton>
                <BarButton aria-label="확대"><Icon w={12} h={12} d="M3 6h6M6 3v6"><circle cx="6" cy="6" r="5.5" /></Icon></BarButton>
                <BarButton>A</BarButton>
                <BarButton aria-label="설정"><Gear /></BarButton>
                <BarButton aria-label="도구"><Icon w={12} h={12} d="M.5 4V1.5h11V4M2 3.5h2l1 2h2l1-2h2M5 6v5.500h2.500V6" /></BarButton>
                <BarButton aria-label="엑셀"><Icon w={12} h={12} d="M3.5 3V.5h8v8h-3M6 3.5h4M7 5.5h3M1 4.5l5 6.500M6 4.5L1 11" sw={1} /></BarButton>
                <BarButton $on aria-label="표"><Icon w={12} h={11} d="M.5.5h11v10H.5zM.5 2.5h11M4.5 3v7M6 5.5h2M6 7.5h2M9 5.5h1M9 7.5h1M2 5.5h1M2 7.5h1" /></BarButton>
                <BarButton aria-label="차트"><Icon w={12} h={11} d="M.5.5h11v10H.5zM.5 7.5h11M4.5 8v3M8 8v3"><path d="M2 6l2-2l2 1l4-3" stroke="#c00" /></Icon></BarButton>
                <BarButton $on aria-label="십자선"><Icon w={11} h={11} d="M5.5 0v11M0 5.5h11" /></BarButton>
                <BarButton aria-label="창 목록"><Icon w={12} h={12} d="M3.5 4V.5h8v7h-2M.5 4.5h8v7h-8zM.5 5.5h8M3.5 1.5h8"><path d="M2 9.500l2-1l1 1l2-2" stroke="#c00" /></Icon></BarButton>
                <BarButton aria-label="전체화면"><Icon w={12} h={11} d="M.5 3V.5H3M9 .5h2.500V3M11.5 8v2.500H9M3 10.5H.5V8M3.5 3h5v5h-5zM1 1l2 2M11 1L9 3M11 10L9 8M1 10l2-2" /></BarButton>
              </BottomBar>
            </ChartBox>

            <Strip>
              {stripIcons.map((s) => (
                <StripButton key={s.name} $on={s.on} $line={s.line} aria-label={s.name}>{s.node}</StripButton>
              ))}
            </Strip>
          </Body>
        </Window>
      </Desktop>
    </>
  );
}
